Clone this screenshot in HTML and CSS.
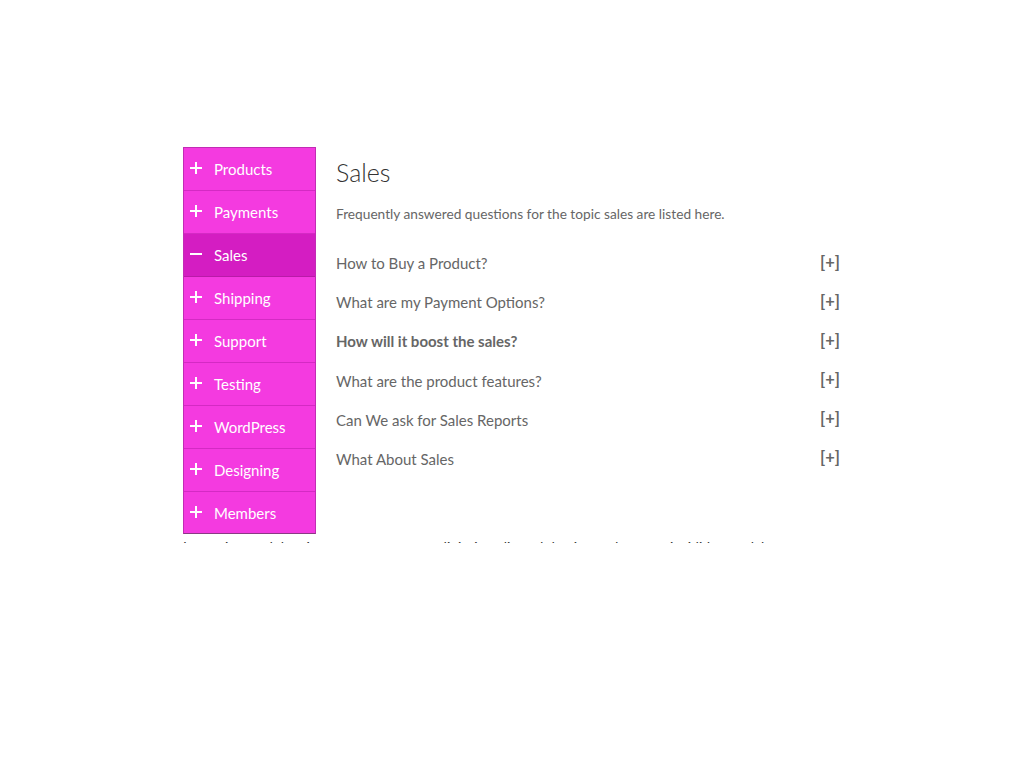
FILE: index.html
```html
<!DOCTYPE html>
<html>
<head>
<meta charset="utf-8">
<link rel="stylesheet" href="styles.css">
</head>
<body>
<div class="wrap">
  <div class="faq">
    <ul class="menu">
      <li class="item"><span class="pm plus"></span>Products</li>
      <li class="item"><span class="pm plus"></span>Payments</li>
      <li class="item active"><span class="pm"></span>Sales</li>
      <li class="item"><span class="pm plus"></span>Shipping</li>
      <li class="item"><span class="pm plus"></span>Support</li>
      <li class="item"><span class="pm plus"></span>Testing</li>
      <li class="item"><span class="pm plus"></span>WordPress</li>
      <li class="item"><span class="pm plus"></span>Designing</li>
      <li class="item last"><span class="pm plus"></span>Members</li>
    </ul>
    <div class="content">
      <h1 class="title">Sales</h1>
      <p class="desc">Frequently answered questions for the topic sales are listed here.</p>
      <div class="q first"><span>How to Buy a Product?</span><span class="tog">[+]</span></div>
      <div class="q"><span>What are my Payment Options?</span><span class="tog">[+]</span></div>
      <div class="q bold"><span>How will it boost the sales?</span><span class="tog">[+]</span></div>
      <div class="q"><span>What are the product features?</span><span class="tog">[+]</span></div>
      <div class="q"><span>Can We ask for Sales Reports</span><span class="tog">[+]</span></div>
      <div class="q"><span>What About Sales</span><span class="tog">[+]</span></div>
    </div>
  </div>
  <p class="after">Lorem ipsum dolor sit amet, consectetur adipiscing elit, sed do eiusmod tempor incididunt ut labore.</p>
</div>
</body>
</html>
```
FILE: styles.css
```css
html, body { margin: 0; padding: 0; background: #fff; }
body { font-family: "Lato", "Liberation Sans", sans-serif; }
.wrap {
  width: 658px;
  margin: 147px auto 0;
  height: 396px;
  overflow: hidden;
}
.faq { display: flex; align-items: flex-start; }
.menu {
  list-style: none;
  margin: 0;
  padding: 0;
  width: 131px;
  border: 1px solid #c22cb4;
  border-bottom-color: #8a3a84;
  background: #f43ae0;
  flex: none;
}
.item {
  height: 42px;
  border-bottom: 1px solid #d42ac4;
  display: flex;
  align-items: center;
  color: #fff;
  font-size: 15px;
  padding-left: 6px;
}
.item.last { border-bottom: none; height: 41px; }
.item.active { background: #d41dc2; border-bottom-color: #b91aa8; }
.pm {
  position: relative;
  width: 12px;
  height: 12px;
  margin-right: 12px;
  margin-top: -2px;
}
.pm::before {
  content: "";
  position: absolute;
  left: 0; right: 0; top: 5px;
  height: 2px;
  background: #fff;
}
.pm.plus::after {
  content: "";
  position: absolute;
  top: 0; bottom: 0; left: 5px;
  width: 2px;
  background: #fff;
}
.content {
  flex: 1;
  padding-left: 20px;
  color: #666;
}
.title {
  font-weight: 300;
  font-size: 25px;
  color: #333;
  margin: 10px 0 0;
  line-height: 30px;
}
.desc {
  font-size: 13.7px;
  margin: 18px 0 0;
  line-height: 18px;
}
.q {
  display: flex;
  justify-content: space-between;
  align-items: center;
  font-size: 15px;
  line-height: 20px;
  margin-top: 19.2px;
}
.q.first { margin-top: 30px; }
.q.bold span:first-child { font-weight: 700; }
.tog {
  font-weight: 700;
  font-size: 16.5px;
  color: #666;
  margin-top: -3px;
  margin-right: 1px;
}
.after {
  font-size: 14px;
  color: #333;
  margin: 3px 0 0;
  line-height: 20px;
}
```
